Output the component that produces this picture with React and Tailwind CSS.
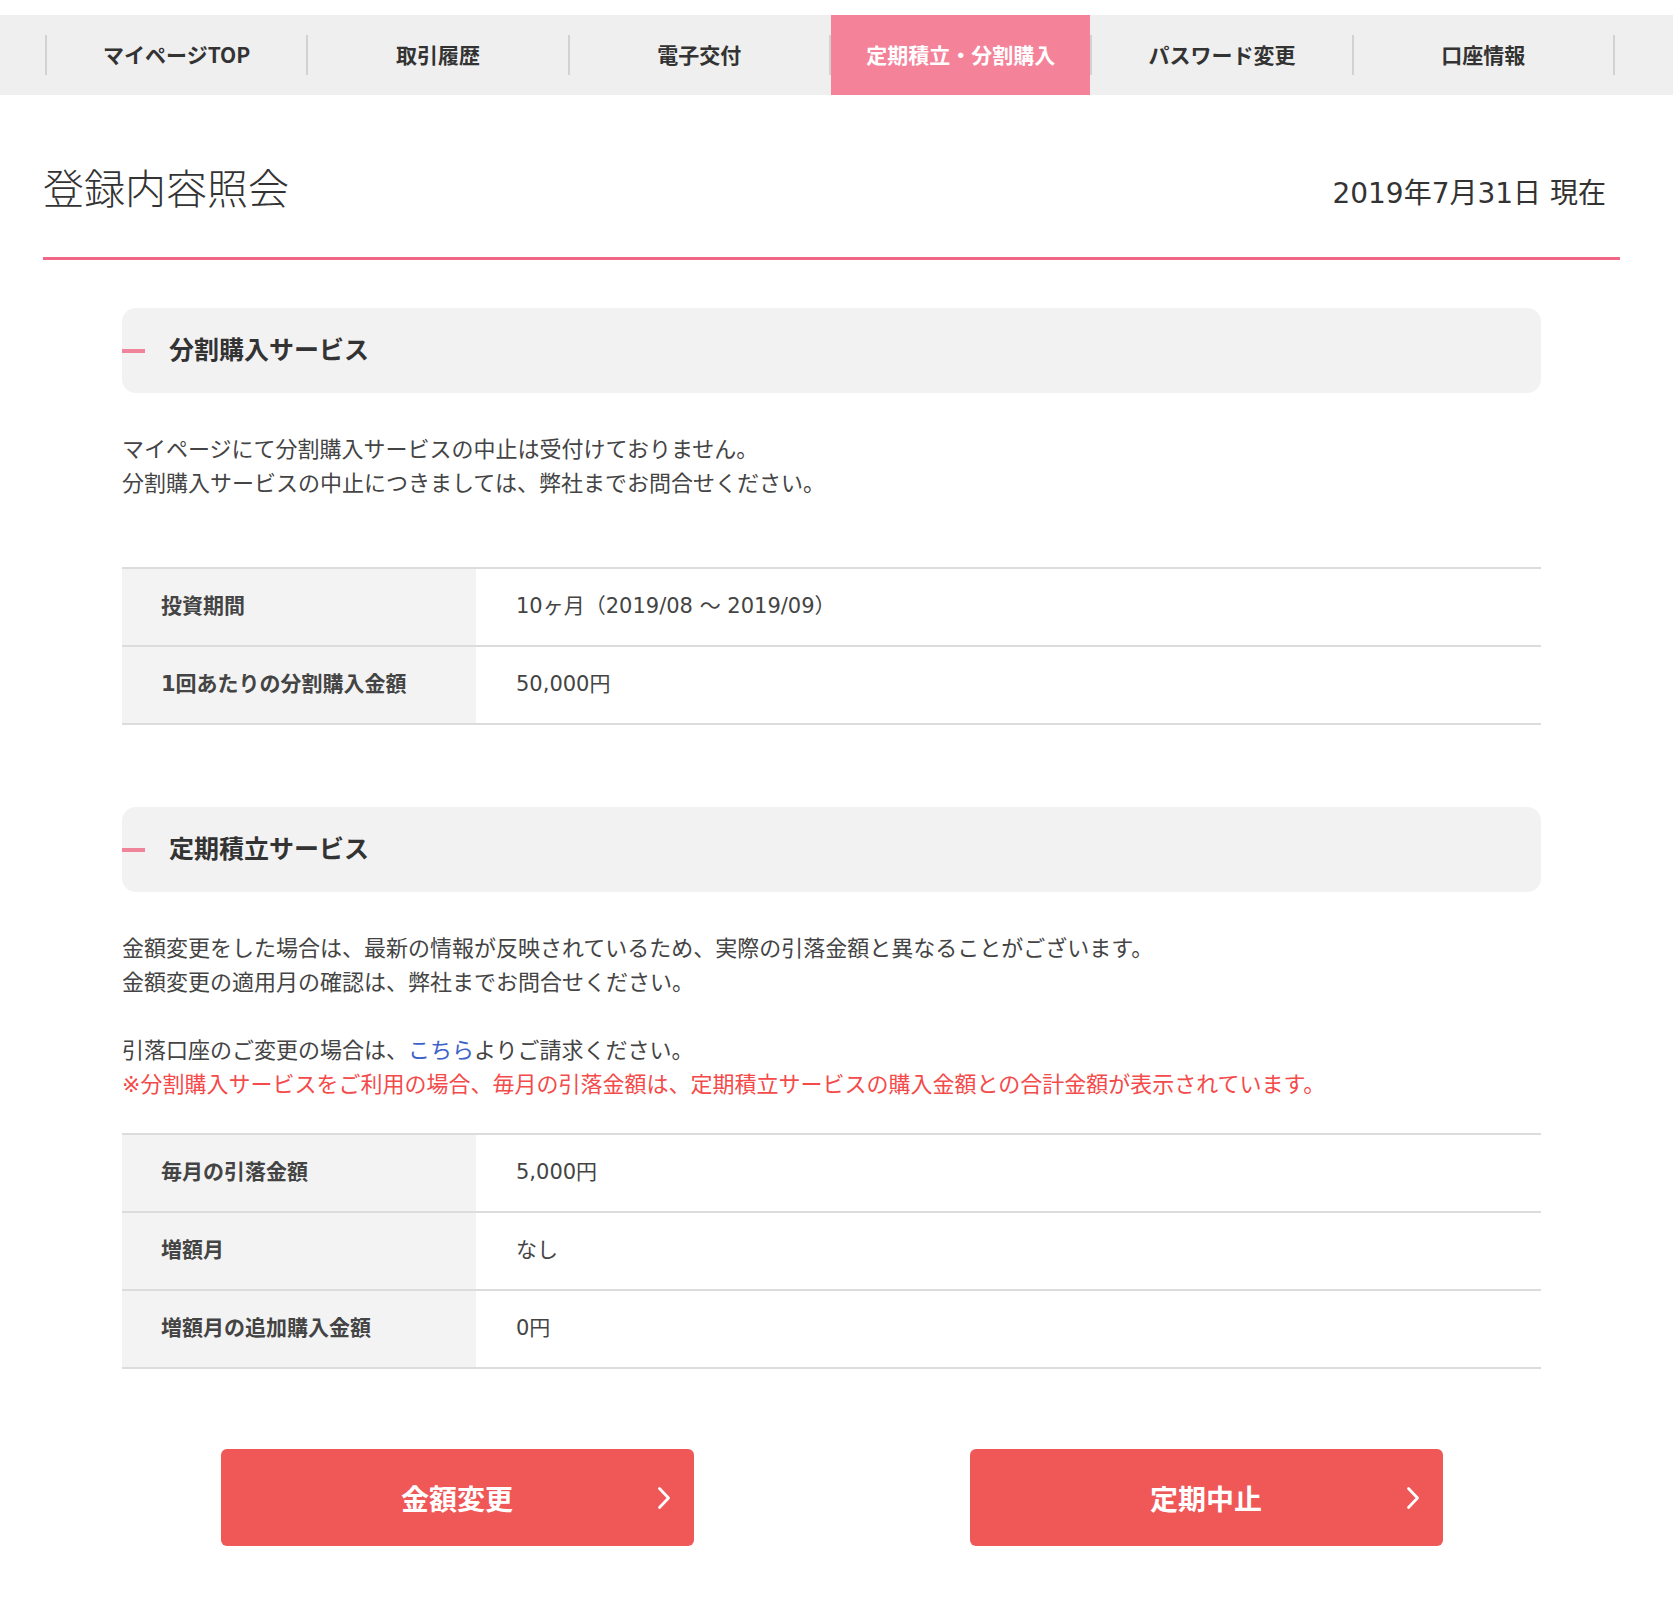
import { Fragment } from "react";

const tabs = [
  { label: "マイページTOP" },
  { label: "取引履歴" },
  { label: "電子交付" },
  { label: "定期積立・分割購入", active: true },
  { label: "パスワード変更" },
  { label: "口座情報" },
];

// Latin glyphs from DejaVu (Verdana-like widths), kana/kanji from Noto CJK
const font = { fontFamily: '"DejaVu Sans", "Noto Sans CJK JP", "Noto Sans", sans-serif' };
const cjkFont = { fontFamily: '"Noto Sans CJK JP", "Noto Sans", sans-serif' };

const SectionHeader = ({ title }) => (
  <div className="flex h-[85px] items-center rounded-[14px] bg-[#f2f2f2]">
    <span className="h-[4px] w-[23px] bg-[#f0849b]"></span>
    <h2 className="ml-[24px] text-[25px] font-bold text-[#333]">{title}</h2>
  </div>
);

const InfoTable = ({ rows }) => (
  <table className="w-full border-collapse border-t-2 border-[#dcdcdc]">
    <tbody>
      {rows.map((row, index) => (
        <tr key={index} className="h-[78px] border-b-2 border-[#dcdcdc]">
          <th className="w-[354px] bg-[#f3f3f3] pl-[39px] text-left text-[21px] font-bold text-[#444]">
            {row.label}
          </th>
          <td className="pl-[40px] text-[21px] text-[#444]">{row.value}</td>
        </tr>
      ))}
    </tbody>
  </table>
);

const ActionButton = ({ label }) => (
  <button
    className="relative flex h-[97px] w-[473px] items-center justify-center rounded-[6px] bg-[#f05757] text-[28px] font-bold text-white"
    style={cjkFont}
  >
    {label}
    <svg
      className="absolute right-[23px] top-1/2 h-[24px] w-[14px] -translate-y-1/2"
      viewBox="0 0 14 24"
      fill="none"
      stroke="white"
      strokeWidth="2.8"
      strokeLinecap="round"
      strokeLinejoin="round"
    >
      <path d="M2.5 2.5l9 9.5-9 9.5" />
    </svg>
  </button>
);

const App = () => {
  return (
    <div className="min-h-[1597px] bg-white pt-[15px]" style={font}>
      {/* global nav */}
      <nav className="h-[80px] bg-[#efefef]">
        <div className="ml-[45px] flex h-full w-[1570px]">
          <span className="h-[40px] w-[2px] self-center bg-[#d2d2d2]"></span>
          {tabs.map((tab, index) => (
            <Fragment key={index}>
              <a
                href="#"
                className={`flex flex-1 items-center justify-center text-[21px] font-bold ${
                  tab.active ? "bg-[#f4839a] text-white" : "text-[#333]"
                }`}
                style={cjkFont}
              >
                {tab.label}
              </a>
              <span className="h-[40px] w-[2px] self-center bg-[#d2d2d2]"></span>
            </Fragment>
          ))}
        </div>
      </nav>

      <main className="ml-[43px] w-[1577px]">
        <div className="flex h-[165px] items-center justify-between border-b-[3px] border-[#ef6784] pt-[28px]">
          <h1 className="text-[41px] font-light leading-[60px] text-[#333]">登録内容照会</h1>
          <p className="mr-[14px] pt-[8px] text-[28px] text-[#333]">2019年7月31日 現在</p>
        </div>

        <div className="px-[79px]">
          {/* 分割購入 */}
          <section className="mt-[48px]">
            <SectionHeader title="分割購入サービス" />
            <p className="mt-[40px] text-[22px] leading-[34px] text-[#444]">
              マイページにて分割購入サービスの中止は受付けておりません。
              <br />
              分割購入サービスの中止につきましては、弊社までお問合せください。
            </p>
            <div className="mt-[66px]">
              <InfoTable
                rows={[
                  { label: "投資期間", value: "10ヶ月（2019/08 ～ 2019/09）" },
                  { label: "1回あたりの分割購入金額", value: "50,000円" },
                ]}
              />
            </div>
          </section>

          {/* 定期積立 */}
          <section className="mt-[82px]">
            <SectionHeader title="定期積立サービス" />
            <div className="mt-[40px] text-[22px] leading-[34px] text-[#444]">
              <p>
                金額変更をした場合は、最新の情報が反映されているため、実際の引落金額と異なることがございます。
                <br />
                金額変更の適用月の確認は、弊社までお問合せください。
              </p>
              <p className="mt-[34px]">
                引落口座のご変更の場合は、
                <a href="#" className="text-[#3b62c8]">
                  こちら
                </a>
                よりご請求ください。
              </p>
              <p className="text-[#f44a4a]">
                ※分割購入サービスをご利用の場合、毎月の引落金額は、定期積立サービスの購入金額との合計金額が表示されています。
              </p>
            </div>
            <div className="mt-[31px]">
              <InfoTable
                rows={[
                  { label: "毎月の引落金額", value: "5,000円" },
                  { label: "増額月", value: "なし" },
                  { label: "増額月の追加購入金額", value: "0円" },
                ]}
              />
            </div>
          </section>

          <div className="mt-[80px] flex justify-center gap-[276px] pb-[52px]">
            <ActionButton label="金額変更" />
            <ActionButton label="定期中止" />
          </div>
        </div>
      </main>
    </div>
  );
};

export default App;
